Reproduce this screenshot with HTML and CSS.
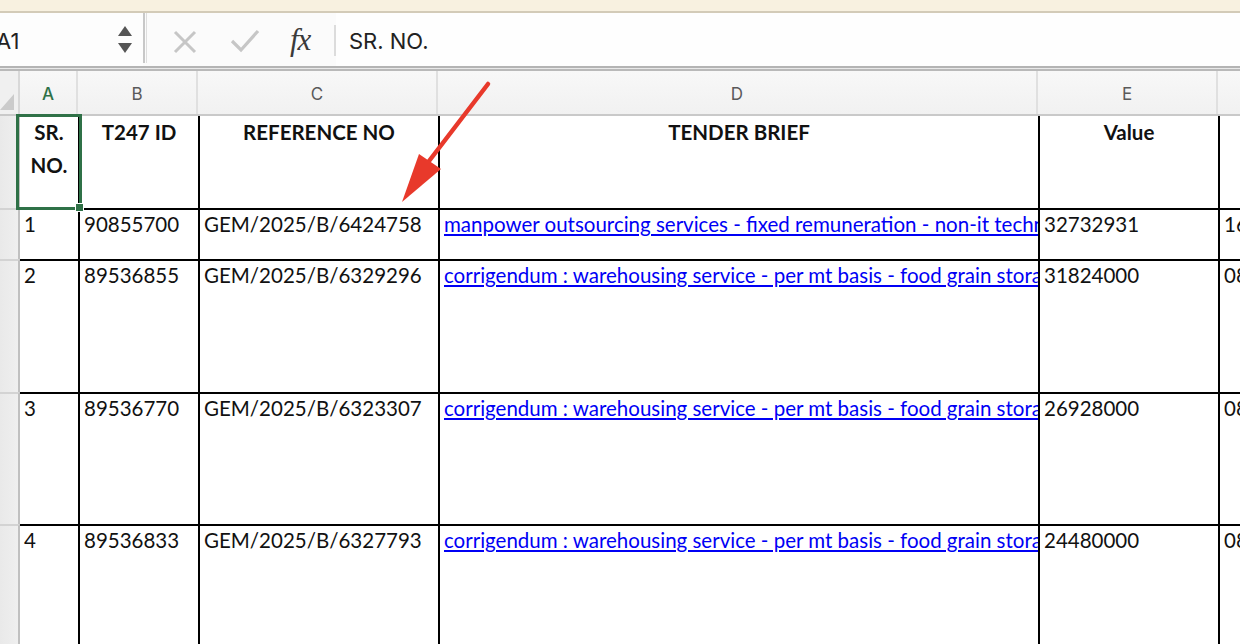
FILE: index.html
```html
<!DOCTYPE html>
<html>
<head>
<meta charset="utf-8">
<link rel="stylesheet" href="styles.css">
</head>
<body>
<div class="app">
  <div class="topstrip"></div>
  <div class="fbar">
    <div class="namebox">
      <span class="ref">A1</span>
      <svg class="spin" width="16" height="30" viewBox="0 0 16 30">
        <polygon points="8,1 15,11 1,11" fill="#555"/>
        <polygon points="1,18 15,18 8,28" fill="#555"/>
      </svg>
    </div>
    <div class="fsep"></div>
    <div class="ficons">
      <svg class="ic-x" width="24" height="24" viewBox="0 0 24 24">
        <path d="M2 2 L22 22 M22 2 L2 22" stroke="#c6c6c6" stroke-width="3" fill="none"/>
      </svg>
      <svg class="ic-check" width="30" height="24" viewBox="0 0 30 24">
        <path d="M2 12 L11 21 L28 2" stroke="#c6c6c6" stroke-width="3.2" fill="none"/>
      </svg>
      <span class="fx">fx</span>
    </div>
    <div class="fdiv"></div>
    <div class="fcontent">SR. NO.</div>
  </div>
  <div class="fline"></div>
  <div class="sheet">
    <div class="row colhdr">
      <div class="corner"><span class="tri"></span></div>
      <div class="ch ch-sel">A</div>
      <div class="ch">B</div>
      <div class="ch">C</div>
      <div class="ch">D</div>
      <div class="ch">E</div>
      <div class="ch"></div>
    </div>
    <div class="row r-head">
      <div class="rh"></div>
      <div class="c ca hd wrap">SR. NO.</div>
      <div class="c hd">T247 ID</div>
      <div class="c hd">REFERENCE NO</div>
      <div class="c hd">TENDER BRIEF</div>
      <div class="c hd">Value</div>
      <div class="c"></div>
    </div>
    <div class="row r1 data">
      <div class="rh"></div>
      <div class="c ca">1</div>
      <div class="c">90855700</div>
      <div class="c">GEM/2025/B/6424758</div>
      <div class="c"><a class="lnk">manpower outsourcing services - fixed remuneration - non-it technical</a></div>
      <div class="c">32732931</div>
      <div class="c">16-07-2025</div>
    </div>
    <div class="row r2 data">
      <div class="rh"></div>
      <div class="c ca">2</div>
      <div class="c">89536855</div>
      <div class="c">GEM/2025/B/6329296</div>
      <div class="c"><a class="lnk">corrigendum : warehousing service - per mt basis - food grain storage</a></div>
      <div class="c">31824000</div>
      <div class="c">08-07-2025</div>
    </div>
    <div class="row r3 data">
      <div class="rh"></div>
      <div class="c ca">3</div>
      <div class="c">89536770</div>
      <div class="c">GEM/2025/B/6323307</div>
      <div class="c"><a class="lnk">corrigendum : warehousing service - per mt basis - food grain storage</a></div>
      <div class="c">26928000</div>
      <div class="c">08-07-2025</div>
    </div>
    <div class="row r4 data">
      <div class="rh"></div>
      <div class="c ca">4</div>
      <div class="c">89536833</div>
      <div class="c">GEM/2025/B/6327793</div>
      <div class="c"><a class="lnk">corrigendum : warehousing service - per mt basis - food grain storage</a></div>
      <div class="c">24480000</div>
      <div class="c">08-07-2025</div>
    </div>
    <div class="sel"></div>
    <div class="handle"></div>
  </div>
  <svg class="arrow" width="1240" height="644" viewBox="0 0 1240 644">
    <line x1="488" y1="84" x2="426" y2="165" stroke="#e8392b" stroke-width="4.5" stroke-linecap="round"/>
    <polygon points="402,202 419,154 441,169" fill="#e8392b"/>
  </svg>
</div>
</body>
</html>
```
FILE: styles.css
```css
* { box-sizing: border-box; }
html, body { margin: 0; padding: 0; background: #fff; }
.app {
  position: relative;
  width: 1240px;
  height: 644px;
  overflow: hidden;
  font-family: Lato, "Open Sans", sans-serif;
}
.topstrip {
  height: 13px;
  background: #f8f1e0;
  border-bottom: 2px solid #d3cbb8;
}
.fbar {
  height: 53px;
  display: flex;
  align-items: stretch;
  background: #fbfbfb;
  font-family: Inter, "Liberation Sans", sans-serif;
}
.namebox {
  width: 143px;
  display: flex;
  align-items: center;
  justify-content: space-between;
  padding-right: 10px;
  background: #fdfdfd;
}
.ref {
  font-size: 22px;
  color: #222;
  margin-left: -4px;
  margin-top: 2px;
}
.fsep {
  width: 4px;
  border-left: 2px solid #c8c8c8;
  border-right: 1px solid #dedede;
  margin-bottom: 3px;
}
.ficons {
  display: flex;
  align-items: center;
  padding-left: 26px;
  width: 187px;
}
.ic-x { margin-top: 4px; }
.ic-check { margin-left: 33px; margin-top: 2px; }
.fx {
  margin-left: 30px;
  font-family: "Liberation Serif", "DejaVu Serif", serif;
  font-style: italic;
  font-size: 31px;
  color: #3a3a3a;
  letter-spacing: -1px;
  margin-top: 0;
}
.fdiv {
  width: 2px;
  background: #dcdcdc;
  margin: 12px 0 10px 0;
}
.fcontent {
  flex: 1;
  display: flex;
  align-items: center;
  padding-left: 13px;
  font-size: 22px;
  color: #222;
  background: #fefefe;
  padding-top: 3px;
}
.fline {
  height: 5px;
  border-top: 2px solid #b4b4b4;
  border-bottom: 2px solid #b9b9b9;
  background: #e9e9e9;
}
.sheet { position: relative; }
.row {
  display: grid;
  grid-template-columns: 20px 58px 120px 240px 600px 180px 200px;
}
.colhdr {
  height: 45px;
  background: linear-gradient(#f8f8f8, #f1f1f1);
  border-bottom: 2px solid #c9c9c9;
  font-family: Inter, "Liberation Sans", sans-serif;
}
.corner {
  position: relative;
  background: #f0f0f0;
  border-right: 2px solid #d8d8d8;
}
.tri {
  position: absolute;
  left: 0;
  bottom: 4px;
  width: 0;
  height: 0;
  border-left: 14px solid transparent;
  border-bottom: 16px solid #cbcbcb;
}
.ch {
  display: flex;
  align-items: center;
  justify-content: center;
  font-size: 17px;
  color: #5a5a5a;
  border-right: 2px solid #e0e0e0;
  padding-top: 2px;
}
.ch-sel { color: #2f7147; font-weight: 500; }
.rh {
  background: linear-gradient(90deg, #e9e9e9, #efefef);
  border-right: 2px solid #c0c0c0;
}
.data .rh { border-top: 2px solid #d3d3d3; }
.c {
  font-size: 20.5px;
  line-height: 28px;
  color: #111;
  padding: 0 4px;
  white-space: nowrap;
  overflow: hidden;
  border-left: 2px solid #000;
}
.c.ca { border-left: none; }
.data .c { border-top: 2px solid #000; }
.hd {
  font-weight: 700;
  text-align: center;
  line-height: 33px;
}
.wrap { white-space: normal; padding: 0 6px; }
.r-head { height: 92px; }
.r1 { height: 51px; }
.r2 { height: 133px; }
.r3 { height: 132px; }
.r4 { height: 140px; }
.lnk {
  color: #0000f5;
  text-decoration: underline;
  text-underline-offset: 2px;
}
.sel {
  position: absolute;
  left: 16px;
  top: 43px;
  width: 66px;
  height: 96px;
  border: 3px solid #2f7147;
}
.handle {
  position: absolute;
  left: 75px;
  top: 132px;
  width: 9px;
  height: 9px;
  background: #2f7147;
  border: 1px solid #fff;
}
.arrow {
  position: absolute;
  left: 0;
  top: 0;
  pointer-events: none;
}
```
